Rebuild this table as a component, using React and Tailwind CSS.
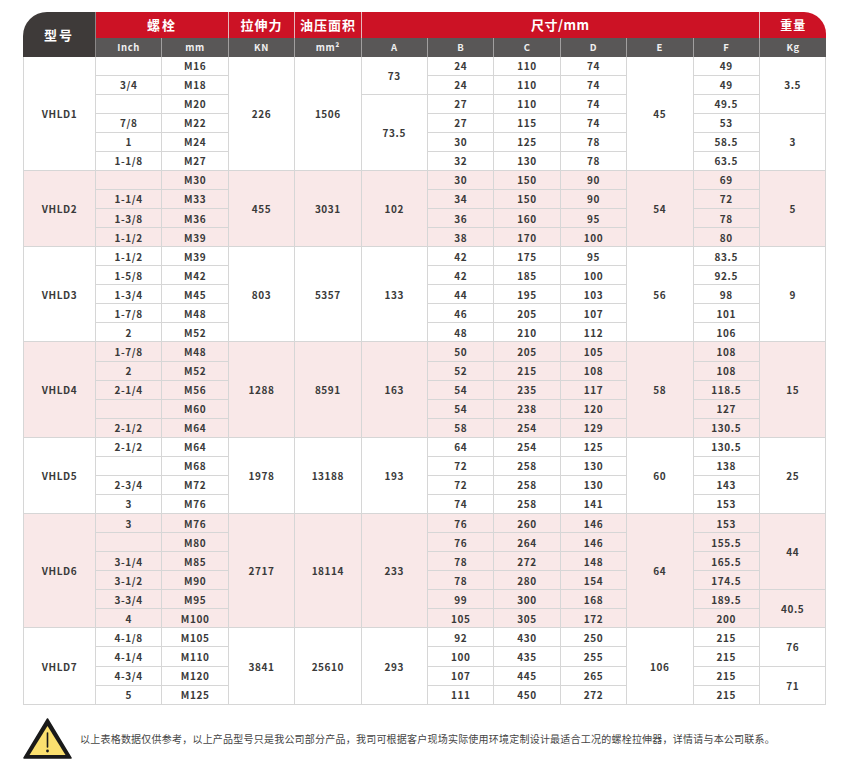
import React from "react";

const PINK = "bg-[#f9e8e8]";

// each group: model, kn, area, A spans, E, Kg spans, rows [inch, mm, B, C, D, F]
const GROUPS = [
  {
    model: "VHLD1",
    kn: "226",
    area: "1506",
    a: [["73", 2], ["73.5", 4]],
    e: "45",
    kg: [["3.5", 3], ["3", 3]],
    rows: [
      ["", "M16", "24", "110", "74", "49"],
      ["3/4", "M18", "24", "110", "74", "49"],
      ["", "M20", "27", "110", "74", "49.5"],
      ["7/8", "M22", "27", "115", "74", "53"],
      ["1", "M24", "30", "125", "78", "58.5"],
      ["1-1/8", "M27", "32", "130", "78", "63.5"],
    ],
  },
  {
    model: "VHLD2",
    pink: true,
    kn: "455",
    area: "3031",
    a: [["102", 4]],
    e: "54",
    kg: [["5", 4]],
    rows: [
      ["", "M30", "30", "150", "90", "69"],
      ["1-1/4", "M33", "34", "150", "90", "72"],
      ["1-3/8", "M36", "36", "160", "95", "78"],
      ["1-1/2", "M39", "38", "170", "100", "80"],
    ],
  },
  {
    model: "VHLD3",
    kn: "803",
    area: "5357",
    a: [["133", 5]],
    e: "56",
    kg: [["9", 5]],
    rows: [
      ["1-1/2", "M39", "42", "175", "95", "83.5"],
      ["1-5/8", "M42", "42", "185", "100", "92.5"],
      ["1-3/4", "M45", "44", "195", "103", "98"],
      ["1-7/8", "M48", "46", "205", "107", "101"],
      ["2", "M52", "48", "210", "112", "106"],
    ],
  },
  {
    model: "VHLD4",
    pink: true,
    kn: "1288",
    area: "8591",
    a: [["163", 5]],
    e: "58",
    kg: [["15", 5]],
    rows: [
      ["1-7/8", "M48", "50", "205", "105", "108"],
      ["2", "M52", "52", "215", "108", "108"],
      ["2-1/4", "M56", "54", "235", "117", "118.5"],
      ["", "M60", "54", "238", "120", "127"],
      ["2-1/2", "M64", "58", "254", "129", "130.5"],
    ],
  },
  {
    model: "VHLD5",
    kn: "1978",
    area: "13188",
    a: [["193", 4]],
    e: "60",
    kg: [["25", 4]],
    rows: [
      ["2-1/2", "M64", "64", "254", "125", "130.5"],
      ["", "M68", "72", "258", "130", "138"],
      ["2-3/4", "M72", "72", "258", "130", "143"],
      ["3", "M76", "74", "258", "141", "153"],
    ],
  },
  {
    model: "VHLD6",
    pink: true,
    kn: "2717",
    area: "18114",
    a: [["233", 6]],
    e: "64",
    kg: [["44", 4], ["40.5", 2]],
    rows: [
      ["3", "M76", "76", "260", "146", "153"],
      ["", "M80", "76", "264", "146", "155.5"],
      ["3-1/4", "M85", "78", "272", "148", "165.5"],
      ["3-1/2", "M90", "78", "280", "154", "174.5"],
      ["3-3/4", "M95", "99", "300", "168", "189.5"],
      ["4", "M100", "105", "305", "172", "200"],
    ],
  },
  {
    model: "VHLD7",
    kn: "3841",
    area: "25610",
    a: [["293", 4]],
    e: "106",
    kg: [["76", 2], ["71", 2]],
    rows: [
      ["4-1/8", "M105", "92", "430", "250", "215"],
      ["4-1/4", "M110", "100", "435", "255", "215"],
      ["4-3/4", "M120", "107", "445", "265", "215"],
      ["5", "M125", "111", "450", "272", "215"],
    ],
  },
];

const td = "border-r border-b border-[#d6d6d6] text-center align-middle p-0";

// starting row index -> [value, span]
const spanAt = (spans) => {
  const map = {};
  let i = 0;
  spans.forEach(([v, n]) => {
    map[i] = [v, n];
    i += n;
  });
  return map;
};

const Warning = () => (
  <svg width="49" height="41" viewBox="0 0 49 41">
    <path d="M24.5 1 L48 40 L1 40 Z" fill="#1a1a1a" stroke="#1a1a1a" strokeWidth="1.5" strokeLinejoin="round" />
    <path d="M24.5 8 L42.5 37 L6.5 37 Z" fill="#fbe06f" />
    <path d="M24.5 15 L24.5 29" stroke="#1a1a1a" strokeWidth="1.6" strokeLinecap="round" />
    <circle cx="24.5" cy="33" r="1.4" fill="#1a1a1a" />
  </svg>
);

const headTop = "text-white text-[13px] font-bold text-center border-r border-[#e6b8bd]";
const headSub = "text-[#f0f0f0] text-[9.5px] font-bold text-center border-r border-[#a19f9f] bg-[#595757] tracking-[0.6px]";

export default function App() {
  return (
    <div
      className="w-[841px] h-[765px] bg-white pt-[12px] pl-[23px]"
      style={{ fontFamily: '"Noto Sans CJK SC", "Noto Sans", sans-serif' }}
    >
      <table className="table-fixed w-[803px] border-separate border-spacing-0 text-[10px] font-semibold text-[#3a3a3a] tracking-[0.6px]">
        <colgroup>
          <col className="w-[73px]" />
          {Array.from({ length: 11 }).map((_, i) => (
            <col key={i} className="w-[66.4px]" />
          ))}
        </colgroup>
        <thead>
          <tr className="h-[25.5px]">
            <th rowSpan={2} className="bg-[#3e3a39] text-white text-[13px] font-bold rounded-tl-[24px] border-r border-[#8a8787] tracking-[2px]">
              型号
            </th>
            <th colSpan={2} className={`${headTop} bg-[#cc1225] tracking-[2px]`}>螺栓</th>
            <th className={`${headTop} bg-[#cc1225] tracking-[1px]`}>拉伸力</th>
            <th className={`${headTop} bg-[#cc1225] tracking-[1px]`}>油压面积</th>
            <th colSpan={6} className={`${headTop} bg-[#cc1225] tracking-[0.5px]`}>尺寸/mm</th>
            <th className="bg-[#cc1225] text-white text-[12px] font-bold text-center rounded-tr-[22px] tracking-[1px]">重量</th>
          </tr>
          <tr className="h-[19px]">
            <th className={headSub}>Inch</th>
            <th className={headSub}>mm</th>
            <th className={headSub}>KN</th>
            <th className={headSub}>mm²</th>
            <th className={headSub}>A</th>
            <th className={headSub}>B</th>
            <th className={headSub}>C</th>
            <th className={headSub}>D</th>
            <th className={headSub}>E</th>
            <th className={headSub}>F</th>
            <th className="text-[#f0f0f0] text-[9.5px] font-bold text-center bg-[#595757] tracking-[0.6px]">Kg</th>
          </tr>
        </thead>
        <tbody>
          {GROUPS.map((g) => {
            const n = g.rows.length;
            const aMap = spanAt(g.a);
            const kgMap = spanAt(g.kg);
            const bg = g.pink ? PINK : "bg-white";
            return g.rows.map((r, i) => (
              <tr key={g.model + i} className={`h-[19.07px] ${bg}`}>
                {i === 0 && (
                  <td rowSpan={n} className={`${td} border-l`}>{g.model}</td>
                )}
                <td className={td}>{r[0]}</td>
                <td className={td}>{r[1]}</td>
                {i === 0 && <td rowSpan={n} className={td}>{g.kn}</td>}
                {i === 0 && <td rowSpan={n} className={td}>{g.area}</td>}
                {aMap[i] && <td rowSpan={aMap[i][1]} className={td}>{aMap[i][0]}</td>}
                <td className={td}>{r[2]}</td>
                <td className={td}>{r[3]}</td>
                <td className={td}>{r[4]}</td>
                {i === 0 && <td rowSpan={n} className={td}>{g.e}</td>}
                <td className={td}>{r[5]}</td>
                {kgMap[i] && <td rowSpan={kgMap[i][1]} className={td}>{kgMap[i][0]}</td>}
              </tr>
            ));
          })}
        </tbody>
      </table>

      <div className="flex items-center mt-[13px]">
        <Warning />
        <p className="ml-[8px] text-[10px] text-[#444] tracking-[0.22px]">
          以上表格数据仅供参考，以上产品型号只是我公司部分产品，我司可根据客户现场实际使用环境定制设计最适合工况的螺栓拉伸器，详情请与本公司联系。
        </p>
      </div>
    </div>
  );
}
